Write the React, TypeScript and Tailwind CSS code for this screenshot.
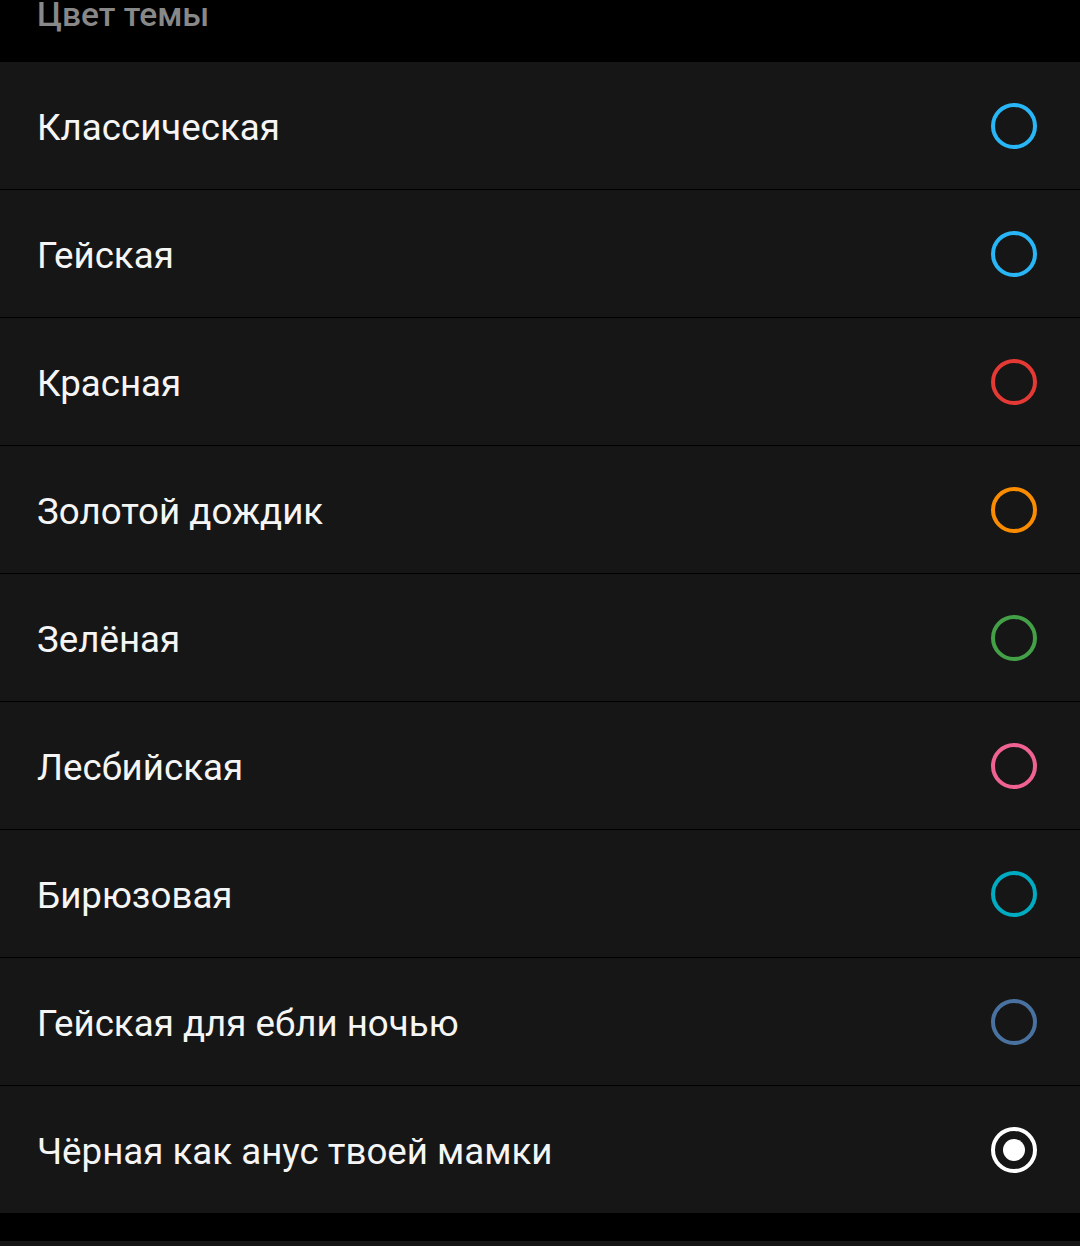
const themes = [
  { name: 'Классическая', ring: 'border-[#29b6f6]' },
  { name: 'Гейская', ring: 'border-[#29b6f6]' },
  { name: 'Красная', ring: 'border-[#e53935]' },
  { name: 'Золотой дождик', ring: 'border-[#fb8c00]' },
  { name: 'Зелёная', ring: 'border-[#43a047]' },
  { name: 'Лесбийская', ring: 'border-[#f06292]' },
  { name: 'Бирюзовая', ring: 'border-[#00acc1]' },
  { name: 'Гейская для ебли ночью', ring: 'border-[#4a72a0]' },
  { name: 'Чёрная как анус твоей мамки', ring: 'border-white', selected: true },
];

const Radio = ({ ring, selected }: { ring: string; selected?: boolean }) => (
  <div className={`flex h-[46px] w-[46px] items-center justify-center rounded-full border-[4px] ${ring}`}>
    {selected && <div className="h-[22px] w-[22px] rounded-full bg-white" />}
  </div>
);

const App = () => {
  return (
    <div className="h-[1246px] w-[1080px] overflow-hidden bg-black font-['Roboto',sans-serif]">
      <div className="h-[62px] overflow-hidden px-[37px]">
        <div className="-mt-[5px] text-[33.5px] font-medium leading-[40px] text-[#888888]">Цвет темы</div>
      </div>
      <div className="flex flex-col gap-px">
        {themes.map((t) => (
          <div key={t.name} className="flex h-[127px] items-center justify-between bg-[#161616] pl-[37px] pr-[43px]">
            <span className="pt-[4px] text-[36.7px] leading-[44px] text-[#f5f5f5]">{t.name}</span>
            <Radio ring={t.ring} selected={t.selected} />
          </div>
        ))}
      </div>
      <div className="mt-[28px] h-[10px] bg-[#161616]" />
    </div>
  );
};

export default App;
